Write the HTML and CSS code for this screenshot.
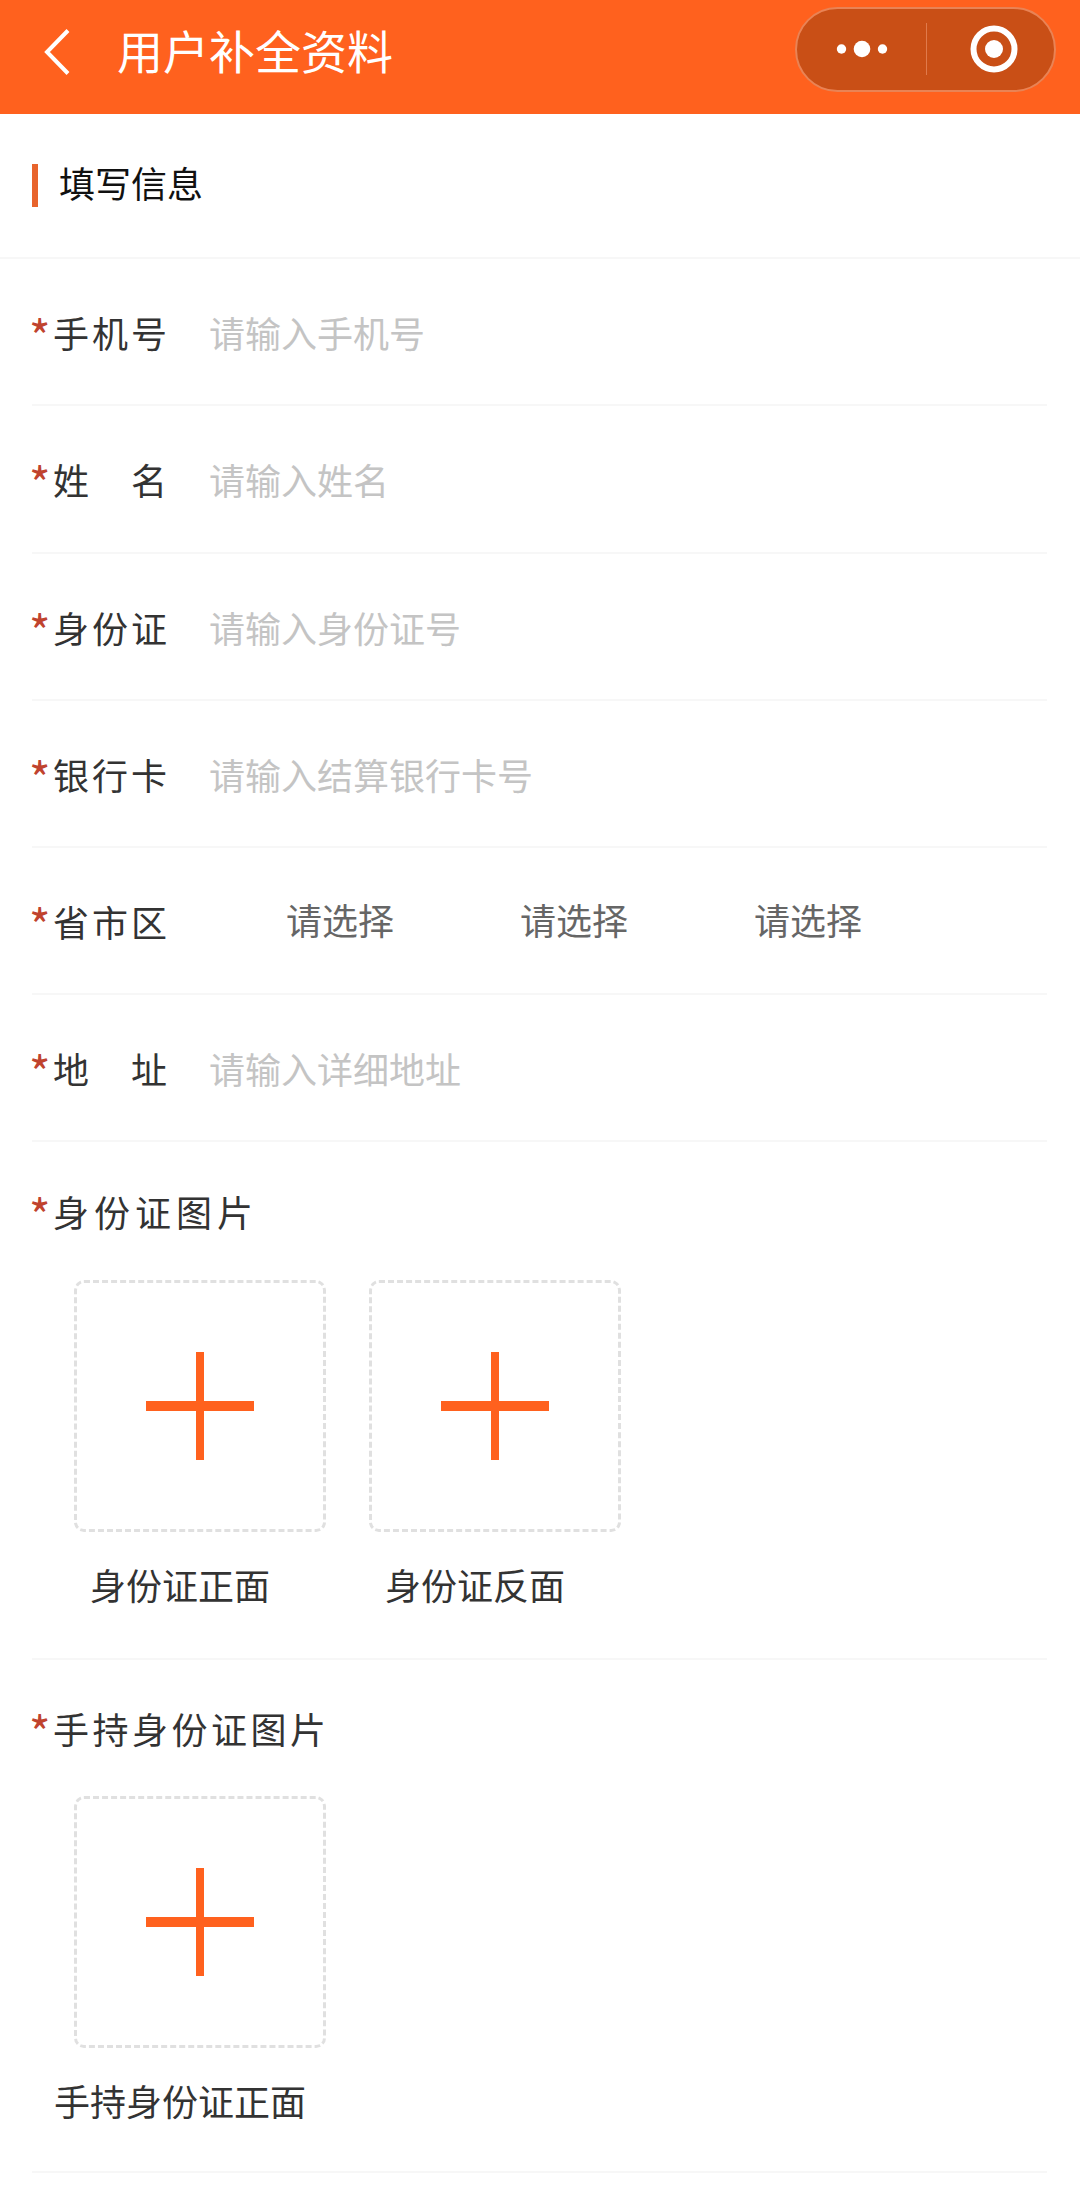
FILE: index.html
```html
<!DOCTYPE html>
<html lang="zh-CN">
<head>
    <meta charset="UTF-8">
    <meta name="viewport" content="width=device-width, initial-scale=1.0">
    <title>用户补全资料</title>
    <link rel="stylesheet" href="styles.css">
</head>
<body>
    <header class="nav">
        <svg class="nav-back" width="26" height="46" viewBox="0 0 26 46">
            <path d="M24 1.5 L3 23 L24 44.5" fill="none" stroke="#fff" stroke-width="4"/>
        </svg>
        <div class="nav-title">用户补全资料</div>
        <div class="capsule">
            <div class="capsule-part capsule-more">
                <svg width="52" height="20" viewBox="0 0 52 20">
                    <circle cx="5.5" cy="10" r="4.7" fill="#fff"/>
                    <circle cx="26" cy="10" r="8.3" fill="#fff"/>
                    <circle cx="46.5" cy="10" r="4.7" fill="#fff"/>
                </svg>
            </div>
            <div class="capsule-line"></div>
            <div class="capsule-part capsule-target">
                <svg width="48" height="48" viewBox="0 0 48 48">
                    <circle cx="24" cy="24" r="20.5" fill="none" stroke="#fff" stroke-width="6"/>
                    <circle cx="24" cy="24" r="9" fill="#fff"/>
                </svg>
            </div>
        </div>
    </header>

    <div class="section-title"><span class="section-bar"></span><span class="section-text">填写信息</span></div>

    <form class="form">
        <div class="row">
            <span class="star">*</span><span class="label">手机号</span>
            <span class="placeholder">请输入手机号</span>
        </div>
        <div class="row">
            <span class="star">*</span><span class="label">姓 名</span>
            <span class="placeholder">请输入姓名</span>
        </div>
        <div class="row">
            <span class="star">*</span><span class="label">身份证</span>
            <span class="placeholder">请输入身份证号</span>
        </div>
        <div class="row">
            <span class="star">*</span><span class="label">银行卡</span>
            <span class="placeholder">请输入结算银行卡号</span>
        </div>
        <div class="row">
            <span class="star">*</span><span class="label">省市区</span>
            <div class="selects">
                <span class="select">请选择</span>
                <span class="select">请选择</span>
                <span class="select">请选择</span>
            </div>
        </div>
        <div class="row">
            <span class="star">*</span><span class="label">地 址</span>
            <span class="placeholder">请输入详细地址</span>
        </div>

        <div class="upload-group">
            <div class="upload-title upload-title-wide"><span class="star">*</span>身份证图片</div>
            <div class="uploads">
                <div class="upload">
                    <div class="upload-box"><span class="plus"></span></div>
                    <div class="upload-name">身份证正面</div>
                </div>
                <div class="upload">
                    <div class="upload-box"><span class="plus"></span></div>
                    <div class="upload-name">身份证反面</div>
                </div>
            </div>
        </div>

        <div class="upload-group">
            <div class="upload-title"><span class="star">*</span>手持身份证图片</div>
            <div class="uploads uploads-last">
                <div class="upload">
                    <div class="upload-box"><span class="plus"></span></div>
                    <div class="upload-name">手持身份证正面</div>
                </div>
            </div>
        </div>
    </form>
</body>
</html>
```

FILE: styles.css
```css
* {
    box-sizing: border-box;
}
body {
    margin: 0;
    background: #fff;
    font-family: "Noto Sans CJK SC", "Noto Sans", sans-serif;
    color: #333;
}
.nav {
    display: flex;
    align-items: center;
    height: 114px;
    padding: 0 24px 16px 44px;
    background: #ff611e;
    color: #fff;
}
.nav-back {
    flex: none;
    margin-top: 5px;
}
.nav-title {
    flex: 1;
    margin-left: 47px;
    font-size: 46px;
}
.capsule {
    display: flex;
    align-items: center;
    width: 261px;
    height: 85px;
    background: #c94f16;
    border: 2px solid #e98355;
    border-radius: 43px;
}
.capsule-part {
    display: flex;
    justify-content: center;
    align-items: center;
}
.capsule-more {
    flex: none;
    width: 129px;
}
.capsule-target {
    flex: 1;
    padding-left: 6px;
}
.capsule-line {
    width: 1px;
    height: 52px;
    background: #e07a4c;
}
.section-title {
    display: flex;
    align-items: center;
    height: 145px;
    padding-left: 32px;
    font-size: 36px;
    color: #111;
    border-bottom: 2px solid #f7f7f7;
}
.section-bar {
    width: 6px;
    height: 43px;
    margin-right: 21px;
    background: #e8642c;
}
.section-text {
    margin-bottom: 8px;
}
.form {
    padding: 0 33px 0 32px;
}
.row {
    display: flex;
    align-items: center;
    height: 147px;
    border-bottom: 2px solid #f7f7f7;
}
.row:nth-child(2) {
    height: 148px;
}
.star {
    width: 24px;
    flex: none;
    margin: 6px 0 0 -3px;
    font-size: 46px;
    line-height: 1;
    color: #c0432e;
}
.label {
    width: 117px;
    flex: none;
    margin-right: 39px;
    font-size: 36px;
    letter-spacing: 3px;
    text-align-last: justify;
}
.placeholder {
    font-size: 36px;
    color: #c4c4c4;
}
.selects {
    display: flex;
    margin-left: 77px;
    gap: 126px;
}
.select {
    font-size: 36px;
    color: #666;
    margin-top: -4px;
}
.upload-group {
    border-bottom: 2px solid #f7f7f7;
}
.upload-title {
    display: flex;
    align-items: center;
    height: 93px;
    padding-top: 43px;
    margin-bottom: 43px;
    font-size: 36px;
    letter-spacing: 3.5px;
}
.upload-title-wide {
    height: 94px;
    padding-top: 44px;
    margin-bottom: 44px;
    letter-spacing: 5px;
}
.uploads {
    display: flex;
    gap: 43px;
    padding-left: 42px;
    padding-bottom: 48px;
}
.uploads-last {
    padding-bottom: 45px;
}
.upload {
    width: 252px;
}
.upload-box {
    display: flex;
    justify-content: center;
    align-items: center;
    width: 252px;
    height: 252px;
    border: 3px dashed #e0e0e0;
    border-radius: 10px;
}
.plus {
    position: relative;
    width: 108px;
    height: 108px;
}
.plus::before,
.plus::after {
    content: "";
    position: absolute;
    background: #ff611e;
}
.plus::before {
    left: 0;
    right: 0;
    top: 49px;
    height: 10px;
}
.plus::after {
    top: 0;
    bottom: 0;
    left: 50px;
    width: 8px;
}
.upload-name {
    width: 252px;
    margin: 26px 0 0 -20px;
    font-size: 36px;
    line-height: 52px;
    text-align: center;
    white-space: nowrap;
}
```
